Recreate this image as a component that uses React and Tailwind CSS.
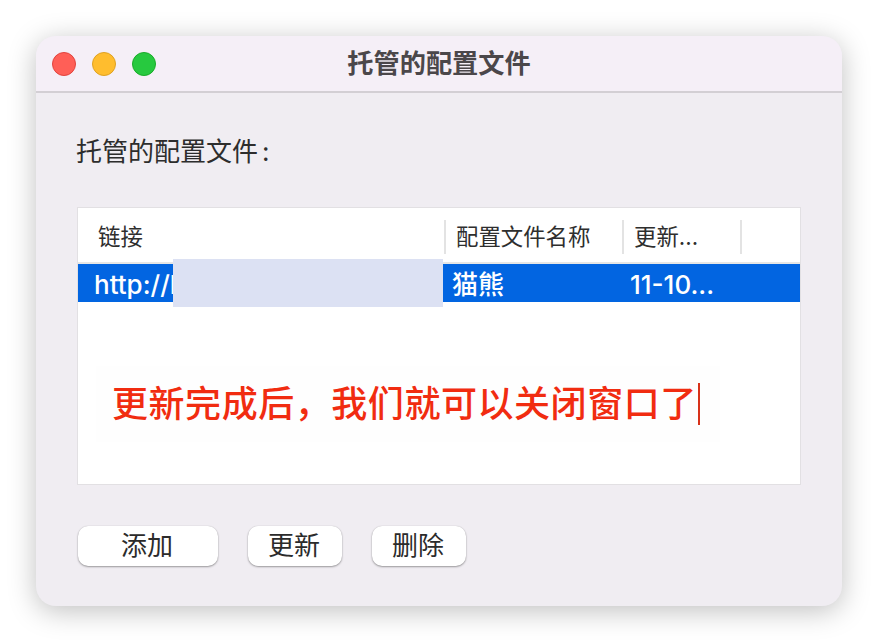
const CJK = "font-['Inter','Noto_Sans_CJK_SC',sans-serif]";

function Light({ className }) {
  return <span className={`size-6 rounded-full border ${className}`} />;
}

function HeaderCell({ className, children }) {
  return (
    <div className={`flex h-[34px] items-center border-r-2 border-[#e3e3e3] text-[22.4px] text-[#2e2e2e] ${className}`}>
      {children}
    </div>
  );
}

function Button({ className, children }) {
  return (
    <button className={`h-10 rounded-[10px] bg-white pr-0.5 text-[26px] leading-none text-[#2b2b2b] shadow-[0_1px_2px_rgba(0,0,0,0.35),0_0_1px_rgba(0,0,0,0.2)] ${className}`}>
      {children}
    </button>
  );
}

export default function App() {
  return (
    <div className={`h-[642px] w-[878px] overflow-hidden bg-white pl-9 pt-9 ${CJK}`}>
      <div className="relative flex h-[570px] w-[806px] flex-col overflow-hidden rounded-[20px] bg-[#f0edf2] shadow-[0_5px_28px_rgba(0,0,0,0.25)]">
        <div className="flex h-[57px] shrink-0 items-center border-b-2 border-[#d3cfd4] bg-[#f5eff7]">
          <div className="flex gap-4 pl-4">
            <Light className="border-[#e0443e] bg-[#ff5f57]" />
            <Light className="border-[#dea123] bg-[#ffbd2e]" />
            <Light className="border-[#1aab29] bg-[#27c93f]" />
          </div>
          <div className="flex-1 pr-[120px] pt-0.5 text-center text-[26.2px] font-semibold leading-none text-[#4b474a]">
            托管的配置文件
          </div>
        </div>

        <div className="flex flex-1 flex-col px-[41px] pt-[42px]">
          <p className="-ml-px text-[26px] leading-[34px] text-[#2d2d2d]">
            托管的配置文件<span className="ml-1">:</span>
          </p>

          <div className="mt-[38px] h-[278px] w-[724px] border border-[#e2e0e3] bg-white">
            <div className="flex h-[56px] items-center border-b-2 border-[#e6e6e6] pt-1">
              <HeaderCell className="w-[368px] pl-5">链接</HeaderCell>
              <HeaderCell className="w-[178px] pl-[10px]">配置文件名称</HeaderCell>
              <HeaderCell className="w-[118px] pl-[10px]">更新...</HeaderCell>
            </div>
            <div className="flex h-[38px] items-center bg-[#0265e1] pt-1 text-[26px] font-medium leading-none text-white">
              <span className="w-[365px] pl-4">http://h</span>
              <span className="w-[178px] pl-[9px]">猫熊</span>
              <span className="pl-[9px]">11-10...</span>
            </div>
          </div>

          <div className="mt-[41px] flex gap-[30px] pl-px">
            <Button className="w-[140px]">添加</Button>
            <Button className="w-[94px]">更新</Button>
            <Button className="w-[94px]">删除</Button>
          </div>
        </div>

        {/* redaction patch over the url */}
        <div className="absolute left-[137px] top-[223px] h-12 w-[270px] bg-[#dce1f3]" />

        {/* red annotation typed over the screenshot */}
        <div className="absolute left-[60px] top-[330px] flex items-center bg-[#fefefe] py-4 pl-4 pr-5">
          <span className="text-[36px] font-medium leading-[44px] tracking-[0.55px] text-[#f12c10]">
            更新完成后，我们就可以关闭窗口了
          </span>
          <span className="ml-px h-[42px] w-0.5 bg-[#d8321a]" />
        </div>
      </div>
    </div>
  );
}
